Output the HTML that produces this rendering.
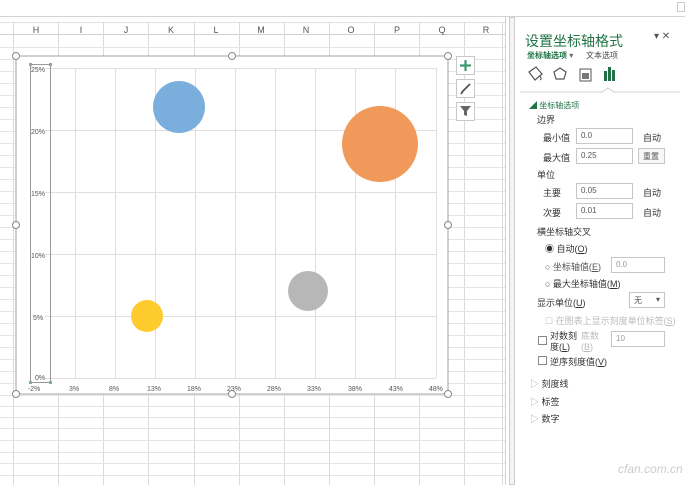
<!DOCTYPE html><html><head><meta charset="utf-8"><style>
*{margin:0;padding:0;box-sizing:border-box}
body{width:685px;height:485px;overflow:hidden;background:#fff;font-family:"Liberation Sans","Noto Sans CJK SC",sans-serif;position:relative;color:#444}
.a{position:absolute}
.t{font-size:9px;color:#333;white-space:nowrap}
.g{font-size:7px;color:#555}
.in{position:absolute;border:1px solid #c6c6c6;height:16px;font-size:8px;padding:2px 4px;color:#555;background:#fff}
.h{position:absolute;width:7px;height:7px;border:1px solid #888;border-radius:50%;background:#fff}
</style></head><body>
<!-- top bar -->
<div class="a" style="left:0;top:0;width:685px;height:17px;border-bottom:1px solid #d4d4d4;background:#fff"></div>
<div class="a" style="left:677px;top:2px;width:8px;height:10px;border:1px solid #ccc"></div>
<!-- header row -->
<div class="a" style="left:0;top:22px;width:505px;height:13px;border-top:1px solid #e0e0e0;border-bottom:1px solid #d0d0d0;background:#fff"></div>
<svg class="a" style="left:0;top:0" width="505" height="485">
<g stroke="#dadada" stroke-width="1">
<line x1="13.5" y1="22" x2="13.5" y2="485"/><line x1="58.5" y1="22" x2="58.5" y2="485"/><line x1="103.5" y1="22" x2="103.5" y2="485"/><line x1="148.5" y1="22" x2="148.5" y2="485"/><line x1="194.5" y1="22" x2="194.5" y2="485"/><line x1="239.5" y1="22" x2="239.5" y2="485"/><line x1="284.5" y1="22" x2="284.5" y2="485"/><line x1="329.5" y1="22" x2="329.5" y2="485"/><line x1="374.5" y1="22" x2="374.5" y2="485"/><line x1="419.5" y1="22" x2="419.5" y2="485"/><line x1="464.5" y1="22" x2="464.5" y2="485"/><line x1="502.5" y1="22" x2="502.5" y2="485"/>
</g>
<g stroke="#e4e4e4">
<line x1="0" y1="47.5" x2="505" y2="47.5"/><line x1="0" y1="59.5" x2="505" y2="59.5"/><line x1="0" y1="71.5" x2="505" y2="71.5"/><line x1="0" y1="83.5" x2="505" y2="83.5"/><line x1="0" y1="95.5" x2="505" y2="95.5"/><line x1="0" y1="107.5" x2="505" y2="107.5"/><line x1="0" y1="119.5" x2="505" y2="119.5"/><line x1="0" y1="131.5" x2="505" y2="131.5"/><line x1="0" y1="143.5" x2="505" y2="143.5"/><line x1="0" y1="155.5" x2="505" y2="155.5"/><line x1="0" y1="167.5" x2="505" y2="167.5"/><line x1="0" y1="179.5" x2="505" y2="179.5"/><line x1="0" y1="191.5" x2="505" y2="191.5"/><line x1="0" y1="203.5" x2="505" y2="203.5"/><line x1="0" y1="215.5" x2="505" y2="215.5"/><line x1="0" y1="227.5" x2="505" y2="227.5"/><line x1="0" y1="239.5" x2="505" y2="239.5"/><line x1="0" y1="251.5" x2="505" y2="251.5"/><line x1="0" y1="263.5" x2="505" y2="263.5"/><line x1="0" y1="275.5" x2="505" y2="275.5"/><line x1="0" y1="287.5" x2="505" y2="287.5"/><line x1="0" y1="299.5" x2="505" y2="299.5"/><line x1="0" y1="311.5" x2="505" y2="311.5"/><line x1="0" y1="323.5" x2="505" y2="323.5"/><line x1="0" y1="335.5" x2="505" y2="335.5"/><line x1="0" y1="347.5" x2="505" y2="347.5"/><line x1="0" y1="359.5" x2="505" y2="359.5"/><line x1="0" y1="371.5" x2="505" y2="371.5"/><line x1="0" y1="383.5" x2="505" y2="383.5"/><line x1="0" y1="395.5" x2="505" y2="395.5"/><line x1="0" y1="406.5" x2="505" y2="406.5"/><line x1="0" y1="417.5" x2="505" y2="417.5"/><line x1="0" y1="428.5" x2="505" y2="428.5"/><line x1="0" y1="440.5" x2="505" y2="440.5"/><line x1="0" y1="452.5" x2="505" y2="452.5"/><line x1="0" y1="463.5" x2="505" y2="463.5"/><line x1="0" y1="475.5" x2="505" y2="475.5"/>
</g>
<g font-size="9" fill="#555" text-anchor="middle" font-family="Liberation Sans">
<text x="36" y="33">H</text><text x="81" y="33">I</text><text x="126" y="33">J</text><text x="171" y="33">K</text><text x="216" y="33">L</text><text x="261" y="33">M</text><text x="306" y="33">N</text><text x="351" y="33">O</text><text x="397" y="33">P</text><text x="442" y="33">Q</text><text x="486" y="33">R</text>
</g>
<!-- chart -->
<rect x="16" y="56" width="432" height="338" fill="#fff" stroke="#a0a0a0"/>
<g stroke="#dedede">
<line x1="45" y1="68.5" x2="436" y2="68.5"/><line x1="45" y1="130.5" x2="436" y2="130.5"/><line x1="45" y1="192.5" x2="436" y2="192.5"/><line x1="45" y1="254.5" x2="436" y2="254.5"/><line x1="45" y1="316.5" x2="436" y2="316.5"/><line x1="45" y1="378.5" x2="436" y2="378.5"/>
<line x1="75.5" y1="68" x2="75.5" y2="378"/><line x1="115.5" y1="68" x2="115.5" y2="378"/><line x1="155.5" y1="68" x2="155.5" y2="378"/><line x1="195.5" y1="68" x2="195.5" y2="378"/><line x1="235.5" y1="68" x2="235.5" y2="378"/><line x1="275.5" y1="68" x2="275.5" y2="378"/><line x1="315.5" y1="68" x2="315.5" y2="378"/><line x1="355.5" y1="68" x2="355.5" y2="378"/><line x1="395.5" y1="68" x2="395.5" y2="378"/><line x1="436.5" y1="68" x2="436.5" y2="378"/>
</g>
<rect x="30.5" y="64.5" width="20" height="318" fill="none" stroke="#999"/>
<g fill="#8aa" ><rect x="29" y="63" width="3" height="3"/><rect x="49" y="63" width="3" height="3"/><rect x="29" y="381" width="3" height="3"/><rect x="49" y="381" width="3" height="3"/></g>
<g font-size="7" fill="#555" font-family="Liberation Sans">
<text x="31" y="72">25%</text><text x="31" y="134">20%</text><text x="31" y="196">15%</text><text x="31" y="258">10%</text><text x="33" y="320">5%</text><text x="35" y="380">0%</text>
</g>
<g font-size="7" fill="#555" text-anchor="middle" font-family="Liberation Sans">
<text x="34" y="391">-2%</text><text x="74" y="391">3%</text><text x="114" y="391">8%</text><text x="154" y="391">13%</text><text x="194" y="391">18%</text><text x="234" y="391">23%</text><text x="274" y="391">28%</text><text x="314" y="391">33%</text><text x="355" y="391">38%</text><text x="396" y="391">43%</text><text x="436" y="391">48%</text>
</g>
<circle cx="179" cy="107" r="26" fill="#7aaedd"/>
<circle cx="380" cy="144" r="38" fill="#f0995a"/>
<circle cx="308" cy="291" r="20" fill="#b7b7b7"/>
<circle cx="147" cy="316" r="16" fill="#fecb2f"/>
<g fill="#fff" stroke="#888"><circle cx="16" cy="56" r="3.5"/><circle cx="232" cy="56" r="3.5"/><circle cx="448" cy="56" r="3.5"/><circle cx="16" cy="225" r="3.5"/><circle cx="448" cy="225" r="3.5"/><circle cx="16" cy="394" r="3.5"/><circle cx="232" cy="394" r="3.5"/><circle cx="448" cy="394" r="3.5"/></g>
<g fill="#fff" stroke="#c8c8c8"><rect x="456.5" y="56.5" width="18" height="18"/><rect x="456.5" y="79.5" width="18" height="18"/><rect x="456.5" y="102.5" width="18" height="18"/></g>
<path d="M465.5 60v11M460 65.5h11" stroke="#3a9a6a" stroke-width="2.2"/>
<path d="M461 94l2-3 7-7" stroke="#555" stroke-width="1.8" fill="none"/>
<path d="M460 106h11l-4 5v5l-3-1v-4z" fill="#666"/>
</svg>
<!-- scrollbar -->
<div class="a" style="left:505px;top:17px;width:1px;height:468px;background:#d0d0d0"></div>
<div class="a" style="left:509px;top:17px;width:6px;height:468px;border:1px solid #ccc;background:#f4f4f4"></div>
<!-- panel -->
<div class="a" style="left:516px;top:17px;width:169px;height:468px;background:#fff"></div>
<div class="a" style="left:525px;top:31px;font-size:14px;color:#217346">设置坐标轴格式</div>
<div class="a" style="left:654px;top:31px;font-size:10px;color:#555">▾ ✕</div>
<div class="a" style="left:527px;top:50px;font-size:8px;color:#217346;font-weight:bold">坐标轴选项 <span style="color:#666;font-weight:normal">▾</span></div>
<div class="a" style="left:586px;top:50px;font-size:8px;color:#444">文本选项</div>
<svg class="a" style="left:520px;top:62px" width="160" height="34">
<path d="M9 10l7-5 6 7-7 6z" fill="none" stroke="#555" stroke-width="1.2"/><path d="M20 14c1 2 2 3 0 4" stroke="#555" fill="none"/>
<path d="M40 6l6 4-2 7h-8l-2-7z" fill="none" stroke="#555" stroke-width="1.2"/>
<rect x="60" y="7" width="11" height="12" fill="none" stroke="#555"/><rect x="62" y="11" width="7" height="6" fill="#777"/>
<rect x="84" y="9" width="3" height="10" fill="#217346"/><rect x="88" y="5" width="3" height="14" fill="#217346"/><rect x="92" y="8" width="3" height="11" fill="#217346"/>
<path d="M0 30h82l6-4 6 4h66" stroke="#d0d0d0" fill="none"/>
</svg>
<div class="a" style="left:529px;top:100px;font-size:8px;color:#217346">◢ 坐标轴选项</div>
<div class="a t" style="left:537px;top:113px">边界</div>
<div class="a t" style="left:543px;top:131px">最小值</div><div class="in" style="left:576px;top:128px;width:57px">0.0</div><div class="a t" style="left:643px;top:131px">自动</div>
<div class="a t" style="left:543px;top:151px">最大值</div><div class="in" style="left:576px;top:148px;width:57px">0.25</div><div class="in" style="left:638px;top:148px;width:27px;background:#f6f6f6">重置</div>
<div class="a t" style="left:537px;top:168px">单位</div>
<div class="a t" style="left:543px;top:186px">主要</div><div class="in" style="left:576px;top:183px;width:57px">0.05</div><div class="a t" style="left:643px;top:186px">自动</div>
<div class="a t" style="left:543px;top:206px">次要</div><div class="in" style="left:576px;top:203px;width:57px">0.01</div><div class="a t" style="left:643px;top:206px">自动</div>
<div class="a t" style="left:537px;top:225px">横坐标轴交叉</div>
<div class="a t" style="left:545px;top:242px">◉ 自动(<u>O</u>)</div>
<div class="a t" style="left:545px;top:260px;color:#555">○ 坐标轴值(<u>E</u>)</div><div class="in" style="left:611px;top:257px;width:54px;color:#999">0.0</div>
<div class="a t" style="left:545px;top:277px">○ 最大坐标轴值(<u>M</u>)</div>
<div class="a t" style="left:537px;top:296px">显示单位(<u>U</u>)</div><div class="in" style="left:629px;top:292px;width:36px">无 <span style="float:right">▾</span></div>
<div class="a t" style="left:545px;top:314px;color:#bbb">☐ 在图表上显示刻度单位标签(<u>S</u>)</div>
<div class="a" style="left:538px;top:336px;width:9px;height:9px;border:1px solid #888"></div>
<div class="a t" style="left:550px;top:331px;line-height:11px">对数刻<br>度(<u>L</u>)</div>
<div class="a t" style="left:581px;top:331px;line-height:11px;color:#bbb">底数<br>(<u>B</u>)</div>
<div class="in" style="left:611px;top:331px;width:54px;color:#999">10</div>
<div class="a" style="left:538px;top:356px;width:9px;height:9px;border:1px solid #888"></div>
<div class="a t" style="left:550px;top:355px">逆序刻度值(<u>V</u>)</div>
<div class="a t" style="left:530px;top:377px"><span style="color:#aaa">▷</span> 刻度线</div>
<div class="a t" style="left:530px;top:395px"><span style="color:#aaa">▷</span> 标签</div>
<div class="a t" style="left:530px;top:412px"><span style="color:#aaa">▷</span> 数字</div>
<div class="a" style="left:618px;top:462px;font-size:12px;color:#ccc;font-style:italic">cfan.com.cn</div>
</body></html>
